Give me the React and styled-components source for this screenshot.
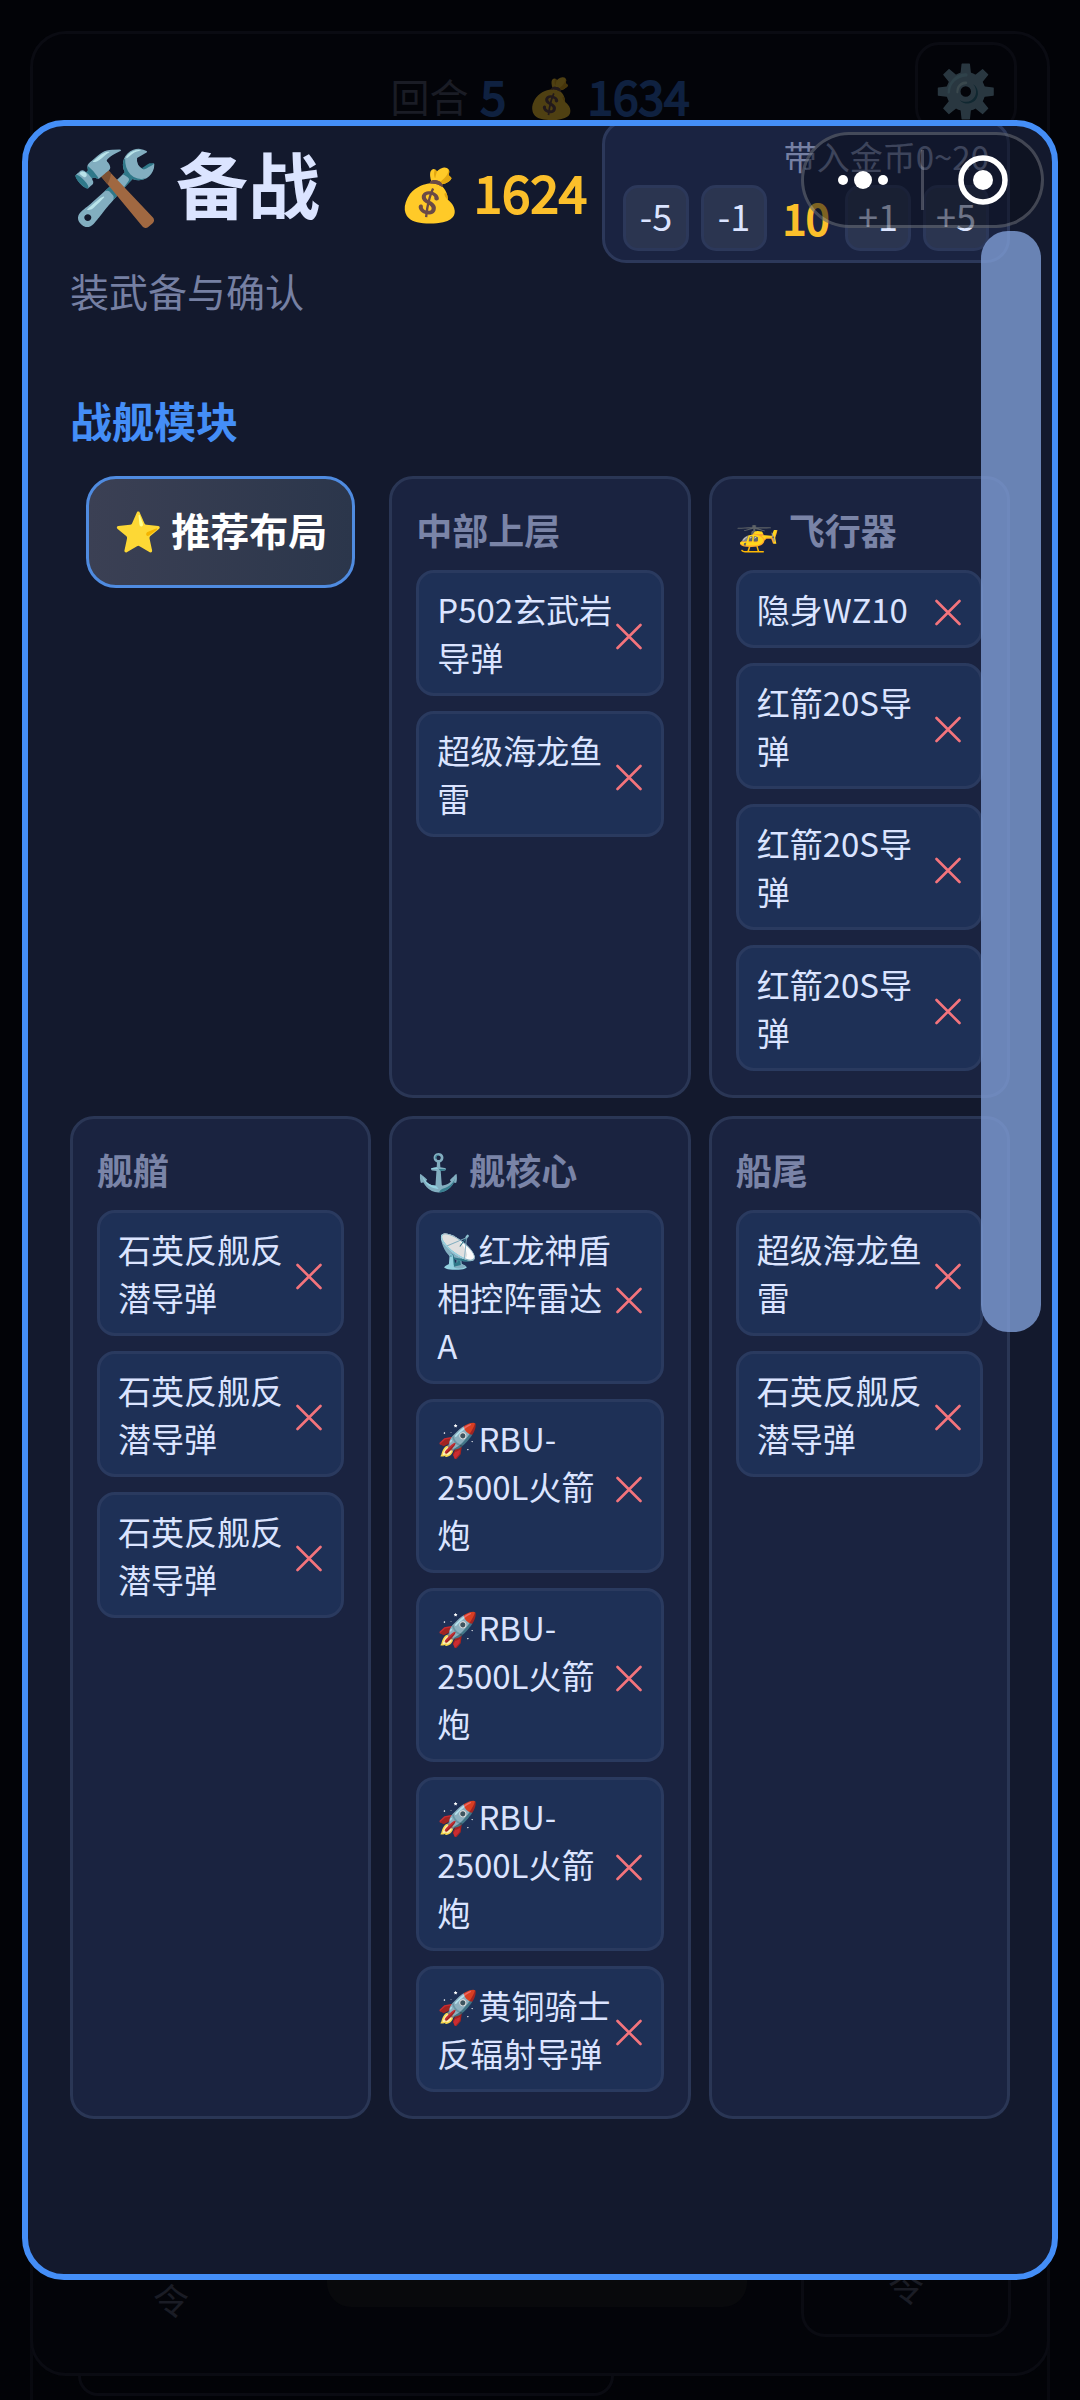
import styled, { createGlobalStyle } from "styled-components";

const GlobalStyle = createGlobalStyle`
    * {
        box-sizing: border-box;
        margin: 0;
        padding: 0;
    }

    body {
        background: #020307;
        color: #dbe4ff;
        font-family: "Noto Sans CJK SC", "Noto Color Emoji", sans-serif;
    }

    button {
        font-family: inherit;
        color: inherit;
        cursor: pointer;
    }
`;

const Page = styled.div`
    position: relative;
    min-height: 100vh;
    overflow: hidden;
    display: flex;
    flex-direction: column;
    padding: 31px 30px 0;
`;

const Board = styled.main`
    position: relative;
    flex: 1;
    display: flex;
    flex-direction: column;
    justify-content: space-between;
    border: 3px solid #0a0b12;
    border-radius: 36px;
    background: #030409;
    padding: 8px 30px 36px;
    z-index: 1;
`;

const StatusBar = styled.header`
    display: grid;
    grid-template-columns: 1fr auto 1fr;
    align-items: center;
`;

const Round = styled.div`
    grid-column: 2;
    display: flex;
    align-items: center;
    color: #1a1c25;
    font-size: 39px;
    line-height: 54px;
    gap: 12px;
    padding-top: 15px;
`;

const Figure = styled.strong`
    font-weight: 400;
    -webkit-text-stroke: 2px currentColor;
`;

const RoundValue = styled(Figure)`
    color: #0f2140;
    font-size: 46px;
`;

const Coins = styled.span`
    opacity: 0.3;
    padding-left: 9px;
`;

const Gear = styled.span`
    opacity: 0.3;
`;

const SettingsButton = styled.button`
    justify-self: end;
    width: 102px;
    height: 90px;
    border: 3px solid #0a0b12;
    border-radius: 24px;
    background: transparent;
    font-size: 51px;
`;

const Controls = styled.footer`
    display: grid;
    grid-template-columns: 204px 1fr 210px;
    gap: 54px;
    align-items: end;
    padding: 0 6px;
`;

const Command = styled.button`
    height: ${(props) => (props.$outlined ? "102px" : "76px")};
    border: 3px solid ${(props) => (props.$outlined ? "#0a0b12" : "transparent")};
    border-radius: 24px;
    background: transparent;
    color: #1a1c25;
    font-size: 36px;
    line-height: 48px;
`;

const Pad = styled.div`
    height: 120px;
    margin-bottom: 30px;
    border-radius: 24px;
    background: #08090c;
`;

const LogStrip = styled.div`
    margin-top: -36px;
    height: 60px;
    border: solid #08090f;
    border-width: 0 3px;
    padding: 36px 45px 0;
`;

const LogPill = styled.div`
    width: 58%;
    height: 20px;
    border: 3px solid #0a0b12;
    border-top: 0;
    border-radius: 0 0 24px 24px;
`;

const Overlay = styled.div`
    position: absolute;
    inset: 0;
    padding: 120px 22px;
    display: flex;
    z-index: 2;
`;

const Dialog = styled.section`
    flex: 1;
    min-width: 0;
    overflow: hidden;
    border: 6px solid #448ef7;
    border-radius: 42px;
    background: #13192d;
    padding: 0 42px;
`;

const DialogHeader = styled.div`
    display: flex;
    align-items: flex-end;
    gap: 15px;
    margin-top: -6px;
`;

const Title = styled.h1`
    font-size: 72px;
    line-height: 102px;
    margin-bottom: 30px;
    white-space: nowrap;
`;

const Gold = styled.div`
    display: flex;
    align-items: center;
    gap: 12px;
    color: #fbbf2b;
    font-size: 51px;
    line-height: 72px;
    margin-left: auto;
    margin-bottom: 36px;
`;

const Budget = styled.div`
    width: 408px;
    border: 3px solid #2c385a;
    border-radius: 24px;
    background: #1a2341;
    padding: 9px 18px;
`;

const BudgetLabel = styled.div`
    color: #7680a3;
    font-size: 33px;
    line-height: 48px;
    text-align: right;
    margin-bottom: 5px;
`;

const Stepper = styled.div`
    display: flex;
    gap: 12px;
`;

const StepButton = styled.button`
    width: 66px;
    height: 66px;
    border: 3px solid #2c385a;
    border-radius: 15px;
    background: #2b3550;
    padding-bottom: 6px;
    font-size: 36px;
    line-height: 48px;
`;

const Amount = styled(Figure)`
    flex: 1;
    color: #fbbf2b;
    font-size: 42px;
    line-height: 63px;
    text-align: center;
`;

const Subtitle = styled.p`
    color: #7680a3;
    font-size: 39px;
    line-height: 54px;
`;

const SectionTitle = styled.h2`
    color: #448ef7;
    font-size: 42px;
    line-height: 60px;
    margin: 73px 0 26px;
`;

const Modules = styled.div`
    display: grid;
    grid-template-columns: repeat(3, 1fr);
    gap: 18px;
`;

const RecommendCell = styled.div`
    display: flex;
    justify-content: center;
    align-items: flex-start;
`;

const RecommendButton = styled.button`
    height: 112px;
    padding: 0 25px 6px;
    border: 3px solid #4f8be0;
    border-radius: 30px;
    background: linear-gradient(90deg, #3b4054, #2b364b);
    color: #ffffff;
    font-size: 39px;
    font-weight: 700;
    white-space: nowrap;
`;

const Card = styled.div`
    min-width: 0;
    display: flex;
    flex-direction: column;
    gap: 15px;
    border: 3px solid #2a3655;
    border-radius: 24px;
    background: #1a2340;
    padding: 24px;
`;

const CardTitle = styled.h3`
    color: #7a84a7;
    font-size: 36px;
    line-height: 52px;
`;

const Item = styled.div`
    display: flex;
    align-items: center;
    border: 3px solid #2a3a5f;
    border-radius: 18px;
    background: #1e3056;
    padding: 12px 18px;
`;

const ItemName = styled.span`
    flex: 1;
    min-width: 0;
    font-size: 33px;
    line-height: 48px;
`;

const RemoveButton = styled.button`
    display: flex;
    border: none;
    background: none;
    color: #f4747c;
    padding-top: 6px;
`;

const ScrollThumb = styled.div`
    position: absolute;
    top: 231px;
    right: 39px;
    width: 60px;
    height: 1101px;
    border-radius: 27px;
    background: rgba(128, 157, 214, 0.8);
`;

const Capsule = styled.div`
    position: absolute;
    top: 132px;
    right: 36px;
    width: 243px;
    height: 96px;
    display: flex;
    align-items: center;
    border: 3px solid rgba(255, 255, 255, 0.22);
    border-radius: 48px;
    background: rgba(10, 13, 24, 0.52);
`;

const CapsuleButton = styled.button`
    flex: 1;
    display: flex;
    justify-content: center;
    border: none;
    background: none;
`;

const Divider = styled.span`
    width: 3px;
    height: 60px;
    background: rgba(255, 255, 255, 0.22);
`;

const modules = [
    {
        title: "中部上层",
        items: ["P502玄武岩导弹", "超级海龙鱼雷"],
    },
    {
        title: "🚁 飞行器",
        items: ["隐身WZ10", "红箭20S导弹", "红箭20S导弹", "红箭20S导弹"],
    },
    {
        title: "舰艏",
        items: ["石英反舰反潜导弹", "石英反舰反潜导弹", "石英反舰反潜导弹"],
    },
    {
        title: "⚓ 舰核心",
        items: [
            "📡红龙神盾相控阵雷达A",
            "🚀RBU-2500L火箭炮",
            "🚀RBU-2500L火箭炮",
            "🚀RBU-2500L火箭炮",
            "🚀黄铜骑士反辐射导弹",
        ],
    },
    {
        title: "船尾",
        items: ["超级海龙鱼雷", "石英反舰反潜导弹"],
    },
];

const CrossIcon = () => (
    <svg width="27" height="27" viewBox="0 0 27 27" fill="none">
        <path
            d="M1.5 2 24.5 25M24.5 2 1.5 25"
            stroke="currentColor"
            strokeWidth="2.6"
            strokeLinecap="round"
        />
    </svg>
);

const MoreIcon = () => (
    <svg width="52" height="20" viewBox="0 0 52 20" fill="#fff">
        <circle cx="6" cy="10" r="5" />
        <circle cx="26" cy="10" r="9" />
        <circle cx="46" cy="10" r="5" />
    </svg>
);

const TargetIcon = () => (
    <svg width="50" height="50" viewBox="0 0 50 50" fill="none">
        <circle cx="25" cy="25" r="22" stroke="#fff" strokeWidth="5.5" />
        <circle cx="25" cy="25" r="10" fill="#fff" />
    </svg>
);

const ModuleCard = ({ title, items }) => (
    <Card>
        <CardTitle>{title}</CardTitle>
        {items.map((item, index) => (
            <Item key={index}>
                <ItemName>{item}</ItemName>
                <RemoveButton aria-label={item}>
                    <CrossIcon />
                </RemoveButton>
            </Item>
        ))}
    </Card>
);

const App = () => {
    return (
        <Page>
            <GlobalStyle />

            <Board>
                <StatusBar>
                    <Round>
                        回合 <RoundValue>5</RoundValue>
                        <Coins>💰</Coins>
                        <RoundValue>1634</RoundValue>
                    </Round>
                    <SettingsButton>
                        <Gear>⚙️</Gear>
                    </SettingsButton>
                </StatusBar>

                <Controls>
                    <Command>令</Command>
                    <Pad />
                    <Command $outlined>令</Command>
                </Controls>
            </Board>
            <LogStrip>
                <LogPill />
            </LogStrip>

            <Overlay>
                <Dialog>
                    <DialogHeader>
                        <Title>🛠️ 备战</Title>
                        <Gold>
                            <span>💰</span>
                            <Figure>1624</Figure>
                        </Gold>
                        <Budget>
                            <BudgetLabel>带入金币0~20</BudgetLabel>
                            <Stepper>
                                <StepButton>-5</StepButton>
                                <StepButton>-1</StepButton>
                                <Amount>10</Amount>
                                <StepButton>+1</StepButton>
                                <StepButton>+5</StepButton>
                            </Stepper>
                        </Budget>
                    </DialogHeader>
                    <Subtitle>装武备与确认</Subtitle>

                    <SectionTitle>战舰模块</SectionTitle>
                    <Modules>
                        <RecommendCell>
                            <RecommendButton>⭐ 推荐布局</RecommendButton>
                        </RecommendCell>
                        {modules.map((module) => (
                            <ModuleCard key={module.title} {...module} />
                        ))}
                    </Modules>
                </Dialog>

                <ScrollThumb />
                <Capsule>
                    <CapsuleButton aria-label="更多">
                        <MoreIcon />
                    </CapsuleButton>
                    <Divider />
                    <CapsuleButton aria-label="关闭">
                        <TargetIcon />
                    </CapsuleButton>
                </Capsule>
            </Overlay>
        </Page>
    );
};

export default App;
